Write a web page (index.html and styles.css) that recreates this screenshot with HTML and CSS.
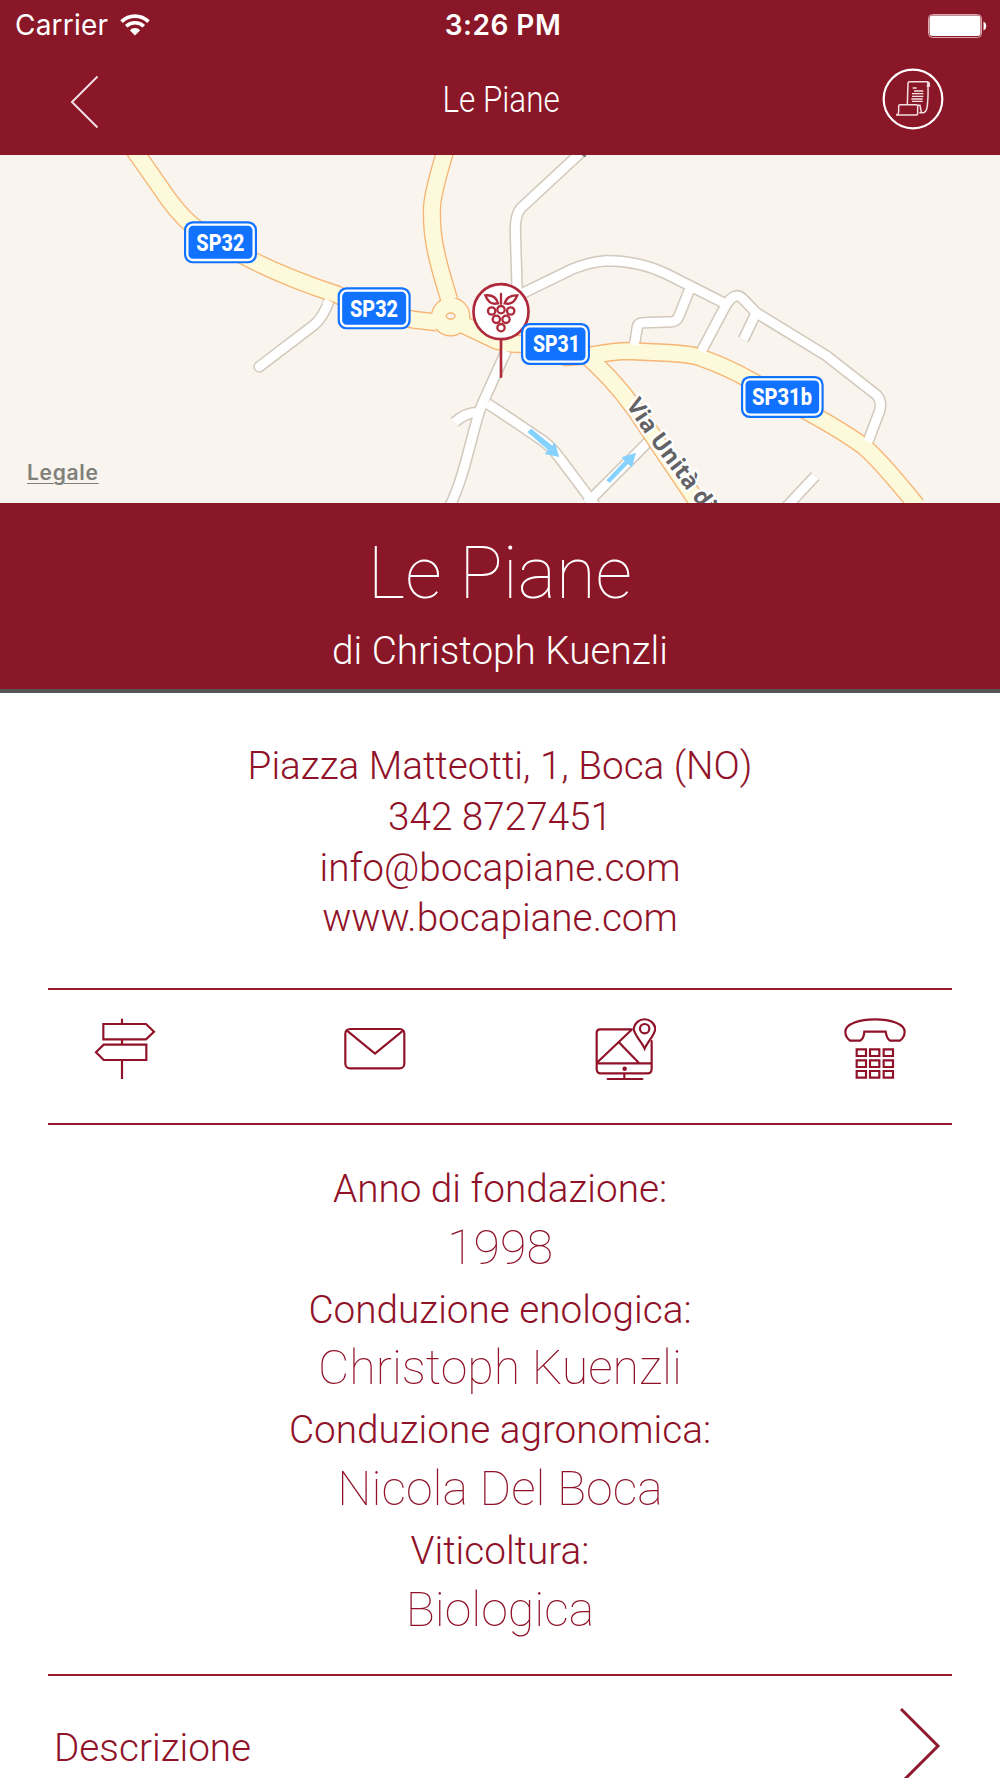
FILE: index.html
```
<!DOCTYPE html>
<html lang="it">
<head>
    <meta charset="UTF-8">
    <meta name="viewport" content="width=device-width, initial-scale=1.0">
    <title>Le Piane</title>
    <link rel="stylesheet" href="styles.css">
</head>
<body>

    <header class="header">
        <div class="status-bar">
            <div class="carrier">
                <span class="carrier-name">Carrier</span>
                <svg class="wifi" width="30" height="23" viewBox="0 0 30 23">
                    <path d="M1.5 8.6a19.3 19.3 0 0 1 27 0M6.2 13.3a12.6 12.6 0 0 1 17.6 0" fill="none" stroke="#fff" stroke-width="3.6"/>
                    <path d="M15 22.5l-5.2-5.3a7.4 7.4 0 0 1 10.4 0z" fill="#fff"/>
                </svg>
            </div>
            <span class="time">3:26 PM</span>
            <svg class="battery" width="59" height="24" viewBox="0 0 59 24">
                <rect x="0.5" y="0.5" width="53" height="23" rx="4" fill="none" stroke="#d9a9b0"/>
                <rect x="1.5" y="1.5" width="51" height="20.5" rx="3" fill="#fff"/>
                <path d="M55.5 7.500a5 5 0 0 1 0 9z" fill="#fff"/>
            </svg>
        </div>
        <nav class="navbar">
            <a href="#" class="back">
                <svg width="30" height="54" viewBox="0 0 30 54"><path d="M27.500 1.500L2 27l25.500 25.500" fill="none" stroke="#f3dfe1" stroke-width="2"/></svg>
            </a>
            <h2 class="nav-title">Le Piane</h2>
            <a href="#" class="scroll">
                <svg width="62" height="62" viewBox="0 0 186 186" fill="none" stroke="#f3dfe1" stroke-width="4.500">
                    <circle cx="93" cy="93" r="88" stroke="#fff" stroke-width="6.500"/>
                    <path d="M76 109l2-63q0-5 6-5h52q6 1 6 7v6h-8M137 43q3 30-1 70-2 20-12 21h-12M42 141h61q4 0 4-6v-22q0-3-4-3H54q-4 0-4 5v17q0 6-6 9M107 112h7l4 21"/>
                    <path d="M92 60h12M96 69h28M90 77h34M90 85h34M88 93h34M90 100h32" stroke-width="4"/>
                </svg>
            </a>
        </nav>
    </header>

    <section class="map">
        <svg class="map-canvas" viewBox="0 15 3000 1044">
            <defs>
                <g id="streets">
                    <path d="M1742 8L1562 175Q1545 195 1546 245L1552 440"/>
                    <path d="M1555 436L1715 358Q1770 335 1819 332C1880 332 1945 345 2000 372L2170 458"/>
                    <path d="M2100 612L2175 470Q2205 418 2232 450L2268 488L2480 618L2630 735Q2648 755 2638 785L2600 885"/>
                    <path d="M1902 595L1912 530Q1915 518 1930 518L2015 515Q2030 514 2036 500L2068 420"/>
                    <path d="M2266 494L2230 569"/>
                    <path d="M990 445Q970 503 942 525L778 650" stroke-linecap="round"/>
                    <path d="M1520 600L1450 755Q1440 775 1432 805C1405 900 1388 990 1350 1068"/>
                    <path d="M1440 788Q1402 783 1364 817"/>
                    <path d="M1462 761L1500 785L1615 863Q1650 885 1680 925L1785 1065"/>
                    <path d="M1760 1060L1960 860"/>
                    <path d="M2446 978L2360 1070"/>
                </g>
                <g id="roads">
                    <path d="M390 -18L505 147Q555 215 600 243Q680 292 745 325Q860 384 1010 433Q1100 480 1240 509L1310 517"/>
                    <path d="M1337 0Q1300 120 1296 170Q1294 235 1305 290Q1315 345 1348 450"/>
                    <path d="M1370 515L1490 572Q1520 583 1570 582L1700 622L1780 615Q1850 603 1880 603L2010 609Q2080 614 2100 622Q2180 650 2250 690L2440 795Q2530 845 2590 888Q2640 930 2750 1066"/>
                    <path d="M1740 600Q1835 680 1905 778L2105 1075"/>
                    <circle cx="1352" cy="500" r="32"/>
                </g>
                <path id="via" d="M1877 764L1952 876L2120 1100"/>
            </defs>

            <use href="#streets" class="street-edge"/>
            <use href="#streets" class="street"/>
            <use href="#roads" class="road-edge"/>
            <use href="#roads" class="road"/>
            <!-- street mouths that open into the main road -->
            <path class="street" d="M978 468L988 452M1903 585L1904 575M2104 605L2110 593M2604 875L2609 862M1510 622L1519 603"/>
            <ellipse class="island" cx="1352" cy="498" rx="13" ry="9"/>
            <path d="M1745 10L1757 19" stroke="#777" stroke-width="8"/>

            <g class="arrow">
                <path d="M1594 836L1657 887L1664 877L1678 921L1634 912L1644 900L1582 846z"/>
                <path d="M1819 991L1874 932L1865 922L1908 908L1896 952L1884 942L1829 999z"/>
            </g>

            <text class="street-name"><textPath href="#via">Via Unità di</textPath></text>

            <g class="pin">
                <path d="M1503 570V680" stroke-width="8"/>
                <circle cx="1503" cy="485" r="82.500" fill="#fff" stroke-width="8"/>
                <g transform="translate(1350 360)" stroke-width="7">
                    <path d="M153 72V101M106 76Q137 73 144 100Q118 107 106 76zM202 76Q190 107 164 100Q171 75 202 76z"/>
                    <circle cx="125" cy="123" r="11"/>
                    <circle cx="153" cy="119" r="11"/>
                    <circle cx="182" cy="123" r="11"/>
                    <circle cx="139" cy="148" r="11"/>
                    <circle cx="168" cy="148" r="11"/>
                    <circle cx="153" cy="173" r="11"/>
                </g>
            </g>

            <g class="shield">
                <rect class="plate" x="552" y="214" width="219" height="126" rx="26"/>
                <rect class="frame" x="562" y="224" width="199" height="106" rx="17"/>
                <text x="589" y="302" textLength="144" lengthAdjust="spacingAndGlyphs">SP32</text>
            </g>
            <g class="shield">
                <rect class="plate" x="1013" y="412" width="219" height="126" rx="26"/>
                <rect class="frame" x="1023" y="422" width="199" height="106" rx="17"/>
                <text x="1050" y="500" textLength="144" lengthAdjust="spacingAndGlyphs">SP32</text>
            </g>
            <g class="shield">
                <rect class="plate" x="1563" y="519" width="207" height="126" rx="26"/>
                <rect class="frame" x="1573" y="529" width="187" height="106" rx="17"/>
                <text x="1599" y="606" textLength="141" lengthAdjust="spacingAndGlyphs">SP31</text>
            </g>
            <g class="shield">
                <rect class="plate" x="2223" y="678" width="248" height="126" rx="26"/>
                <rect class="frame" x="2233" y="688" width="228" height="106" rx="17"/>
                <text x="2256" y="766" textLength="180" lengthAdjust="spacingAndGlyphs">SP31b</text>
            </g>
        </svg>
        <a href="#" class="legal">Legale</a>
    </section>

    <section class="heading">
        <h1>Le Piane</h1>
        <p>di Christoph Kuenzli</p>
    </section>

    <main class="container">
        <address class="contacts">
            <p>Piazza Matteotti, 1, Boca (NO)</p>
            <p>342 8727451</p>
            <p>info@bocapiane.com</p>
            <p>www.bocapiane.com</p>
        </address>

        <div class="actions">
            <a href="#">
                <svg width="62" height="64" viewBox="0 0 186 192">
                    <path d="M84 5V21M84 67V83M84 129V186M28 21H156L180 44L156 67H28zM157 83H29L6 106L29 129H157z"/>
                </svg>
            </a>
            <a href="#">
                <svg width="62" height="64" viewBox="0 0 186 192">
                    <rect x="4" y="36" width="177" height="118" rx="14"/>
                    <path d="M8 40L93 110L178 40"/>
                </svg>
            </a>
            <a href="#">
                <svg width="62" height="64" viewBox="-3 0 186 192">
                    <path d="M110 37H15Q5 37 5 49V155Q5 169 17 169H158Q170 169 170 155V72M5 139H170M8 135L110 38M73 77L132 138M88 169V184M38 186H142" stroke-linecap="round"/>
                    <circle cx="89" cy="155" r="3.500"/>
                    <path d="M149 95C139 72 116 53 116 34A33 33 0 0 1 181 34C181 53 159 72 149 95z"/>
                    <circle cx="149" cy="35" r="14"/>
                </svg>
            </a>
            <a href="#">
                <svg width="62" height="64" viewBox="0 0 186 192">
                    <path d="M18 71Q4 60 4 44C4 20 48 7 93 7S182 20 182 44Q182 60 168 71H138Q128 65 125 44H61Q60 65 48 71z"/>
                    <path d="M38 97H66V117H38zM78 97H106V117H78zM119 97H147V117H119zM38 130H66V150H38zM78 130H106V150H78zM119 130H147V150H119zM38 162H66V182H38zM78 162H106V182H78zM119 162H147V182H119z"/>
                </svg>
            </a>
        </div>

        <dl class="facts">
            <dt>Anno di fondazione:</dt>
            <dd>1998</dd>
            <dt>Conduzione enologica:</dt>
            <dd>Christoph Kuenzli</dd>
            <dt>Conduzione agronomica:</dt>
            <dd>Nicola Del Boca</dd>
            <dt>Viticoltura:</dt>
            <dd>Biologica</dd>
        </dl>

        <a href="#" class="row">
            <span>Descrizione</span>
            <svg width="42" height="78" viewBox="0 0 42 78"><path d="M2 2L39 39L2 76" fill="none" stroke="#8f1a2e" stroke-width="3"/></svg>
        </a>
    </main>

</body>
</html>
```
FILE: styles.css
```
* { margin: 0; padding: 0; box-sizing: border-box; }
html, body { height: 1778px; overflow: hidden; }
body { background: #fff; color: #901229; font-family: Roboto, "Liberation Sans", sans-serif; font-weight: 300; }
a { color: inherit; text-decoration: none; }
svg { display: block; }

/* status bar + navigation */
.header { height: 155px; background: #8a1727; color: #fff; }
.status-bar {
    height: 50px; padding: 0 13px 0 15px;
    display: grid; grid-template-columns: 1fr auto 1fr; align-items: center;
    font-family: Inter, sans-serif; font-size: 28px; line-height: 51px;
}
.carrier { display: flex; align-items: center; gap: 12px; }
.carrier-name { font-weight: 400; letter-spacing: 0.2px; }
.wifi { margin-bottom: 3px; }
.time { font-weight: 600; letter-spacing: 0.5px; padding-left: 4px; }
.battery { justify-self: end; }
.navbar {
    height: 105px; padding: 0 56px 0 70px;
    display: grid; grid-template-columns: 1fr auto 1fr; align-items: center;
}
.back { margin-bottom: 2px; }
.nav-title { font-size: 36.500px; font-weight: 300; line-height: 44px; transform: scaleX(0.86); margin: 0 12px 5px 0; }
.scroll { justify-self: end; margin-bottom: 7px; }

/* map */
.map { position: relative; height: 348px; background: #f9f4ed; }
.map-canvas { width: 1000px; height: 348px; }
.street-edge, .street, .road-edge, .road { fill: none; }
.street-edge { stroke: #d2c8bc; stroke-width: 36px; }
.street { stroke: #fff; stroke-width: 27px; }
.road-edge { stroke: #f6b574; stroke-width: 55px; }
.road { stroke: #fdfadb; stroke-width: 47px; }
.island { fill: #f9f4ed; stroke: #f6b574; stroke-width: 4px; }
.arrow { fill: #86d2ff; }
.street-name {
    font-family: "Open Sans", sans-serif; font-size: 70px; font-weight: 700;
    fill: #636366; stroke: #fff; stroke-width: 14px; stroke-linejoin: round; paint-order: stroke;
}
.pin { fill: none; stroke: #ae2a3b; stroke-linecap: round; }
.plate { fill: #1172ff; }
.frame { fill: none; stroke: #fff; stroke-width: 7px; }
.shield text { font-family: Roboto, sans-serif; font-size: 73px; font-weight: 800; fill: #fff; }
.legal {
    position: absolute; left: 27px; bottom: 16px;
    font-family: Inter, sans-serif; font-size: 21px; font-weight: 600; line-height: 28px; letter-spacing: 0.7px;
    color: #80807a; text-decoration: underline; text-underline-offset: 3px; text-decoration-thickness: 1px;
}

.heading {
    height: 190px; padding-top: 25px; background: #8a1727; color: #fff;
    border-bottom: 4px solid #555; text-align: center;
}
.heading h1 { font-size: 72.500px; font-weight: 100; line-height: 92px; }
.heading p { font-size: 38.700px; line-height: 50px; margin-top: 6px; }

.container { padding: 48px 48px 0; text-align: center; }
.contacts { height: 247px; font-style: normal; font-size: 38.700px; line-height: 50.800px; }

.actions {
    height: 137px; padding: 27px 46px 0 46px;
    border-top: 2px solid #981b32; border-bottom: 2px solid #981b32;
    display: flex; justify-content: space-between;
}
.actions svg { fill: none; stroke: #8f1229; stroke-width: 6.500px; }

.facts { height: 549px; padding-top: 39px; }
.facts dt { font-size: 38.700px; line-height: 50px; }
.facts dd { font-size: 48.300px; font-weight: 100; line-height: 60px; margin: 3.700px 0 7px; }

.row {
    height: 103px; border-top: 2px solid #981b32; padding: 31px 11px 0 6px;
    display: flex; justify-content: space-between; font-size: 38.700px;
}
.row span { line-height: 81px; }
```
